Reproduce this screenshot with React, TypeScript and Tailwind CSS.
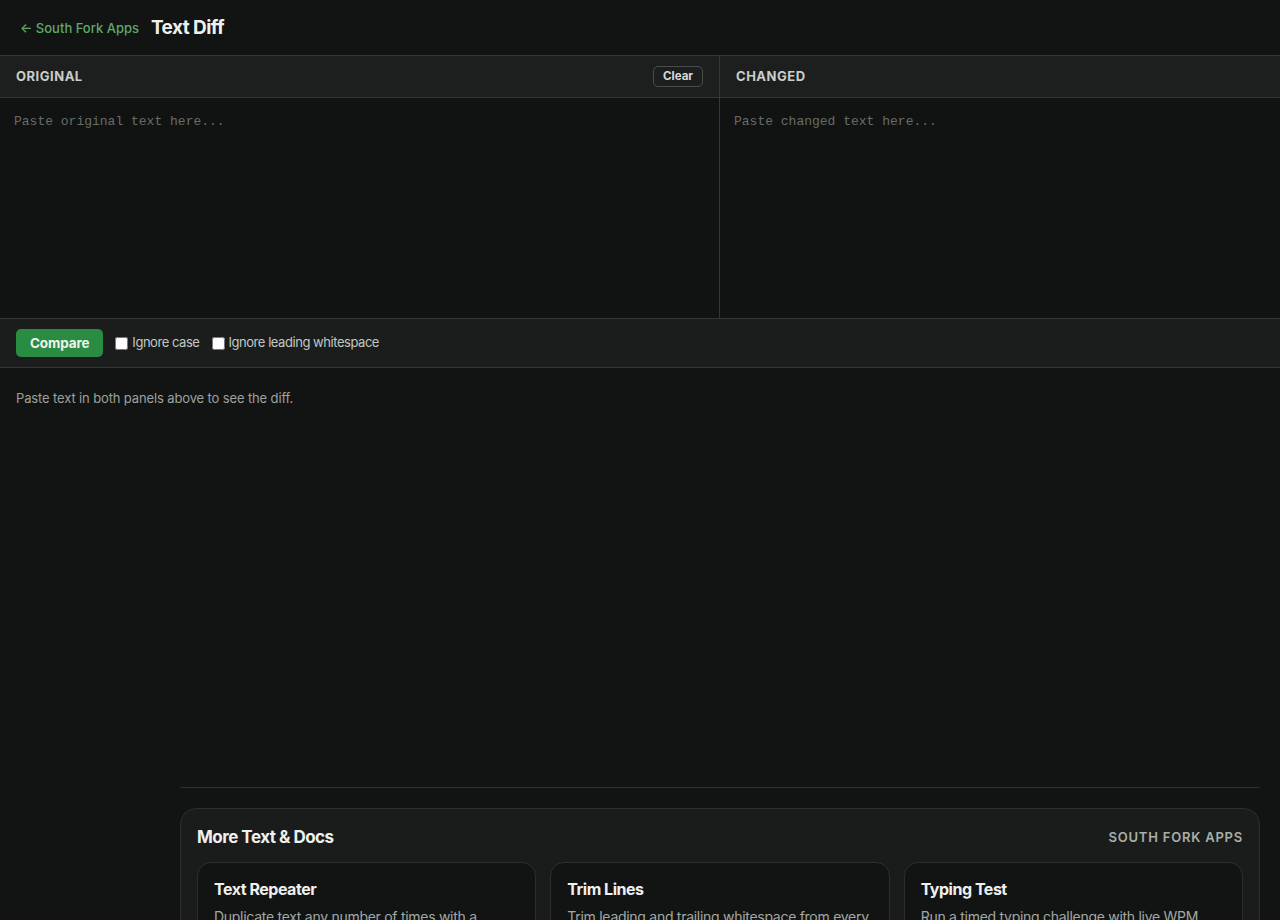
import { useState } from 'react'

const MORE_TOOLS = [
  { title: 'Text Repeater', desc: 'Duplicate text any number of times with a custom separator between each copy.' },
  { title: 'Trim Lines', desc: 'Trim leading and trailing whitespace from every line of your text at once.' },
  { title: 'Typing Test', desc: 'Run a timed typing challenge with live WPM, accuracy and error tracking.' },
]

function PanelHeader({ label, onClear }: { label: string; onClear?: () => void }) {
  return (
    <div className="h-[42px] flex items-center justify-between px-4 bg-[#1d1f1e] border-b border-[#343735]">
      <span className="text-[13px] font-bold tracking-[0.04em] text-[#c9cec9] uppercase">{label}</span>
      {onClear && (
        <button
          onClick={onClear}
          className="h-[21px] px-[9px] rounded-[5px] border border-[#4a4d4b] text-[11.5px] font-bold text-[#d8dcd8] leading-none"
        >
          Clear
        </button>
      )}
    </div>
  )
}

export default function App() {
  const [original, setOriginal] = useState('')
  const [changed, setChanged] = useState('')
  const [ignoreCase, setIgnoreCase] = useState(false)
  const [ignoreWs, setIgnoreWs] = useState(false)

  return (
    <div
      className="min-h-screen bg-[#121413] text-[#e6e9e6]"
      style={{ fontFamily: 'Inter, "Noto Sans", sans-serif' }}
    >
      {/* header */}
      <header className="h-[56px] flex items-center gap-3 px-5 pt-[2px] border-b border-[#343735]">
        <a href="#" className="text-[13px] font-medium text-[#5ea96b]">
          ← South Fork Apps
        </a>
        <h1 className="text-[19px] font-bold tracking-[-0.03em] text-[#eef0ee]">Text Diff</h1>
      </header>

      {/* inputs */}
      <div className="grid grid-cols-[720px_1fr] border-b border-[#343735]">
        <div className="flex flex-col border-r border-[#343735]">
          <PanelHeader label="Original" onClear={() => setOriginal('')} />
          <textarea
            value={original}
            onChange={(e) => setOriginal(e.target.value)}
            placeholder="Paste original text here..."
            className="h-[220px] resize-none bg-[#111312] px-[14px] pt-[16px] pb-[14px] text-[13px] leading-[16px] text-[#dfe3df] placeholder:text-[#676c68] outline-none"
            style={{ fontFamily: '"Liberation Mono", monospace' }}
          />
        </div>
        <div className="flex flex-col">
          <PanelHeader label="Changed" />
          <textarea
            value={changed}
            onChange={(e) => setChanged(e.target.value)}
            placeholder="Paste changed text here..."
            className="h-[220px] resize-none bg-[#111312] px-[14px] pt-[16px] pb-[14px] text-[13px] leading-[16px] text-[#dfe3df] placeholder:text-[#676c68] outline-none"
            style={{ fontFamily: '"Liberation Mono", monospace' }}
          />
        </div>
      </div>

      {/* toolbar */}
      <div className="h-[49px] flex items-center gap-3 px-4 bg-[#1b1d1c] border-b border-[#343735]">
        <button className="h-[28px] px-[14px] rounded-[5px] bg-[#2a8b43] text-[13.5px] font-bold text-[#eef5ef] tracking-[-0.01em]">
          Compare
        </button>
        <label className="flex items-center gap-[4px] text-[13px] text-[#c2c7c3] tracking-[-0.035em]">
          <input
            type="checkbox"
            checked={ignoreCase}
            onChange={(e) => setIgnoreCase(e.target.checked)}
            className="w-[13px] h-[13px]"
          />
          Ignore case
        </label>
        <label className="flex items-center gap-[4px] text-[13px] text-[#c2c7c3] tracking-[-0.035em]">
          <input
            type="checkbox"
            checked={ignoreWs}
            onChange={(e) => setIgnoreWs(e.target.checked)}
            className="w-[13px] h-[13px]"
          />
          Ignore leading whitespace
        </label>
      </div>

      {/* result */}
      <div className="h-[419px] px-4 pt-[21px]">
        <p className="text-[13px] tracking-[-0.01em] text-[#9da29e]">Paste text in both panels above to see the diff.</p>
      </div>

      {/* more tools */}
      <div className="ml-[180px] mr-5 border-t border-[#2a3230] pt-5">
        <section className="rounded-2xl border border-[#2c2f2d] bg-[#1a1c1b] px-4 pt-[16px] pb-4">
          <div className="flex items-center justify-between mb-[11px]">
            <h2 className="text-[17px] font-bold tracking-[-0.03em] text-[#eef0ee]">More Text &amp; Docs</h2>
            <span className="text-[13px] font-semibold tracking-[0.06em] text-[#a9aea9] uppercase">South Fork Apps</span>
          </div>
          <div className="grid grid-cols-3 gap-[14px]">
            {MORE_TOOLS.map((t) => (
              <a
                key={t.title}
                href="#"
                className="block rounded-[14px] border border-[#2c2f2d] bg-[#121413] px-4 pt-[14px] pb-4"
              >
                <h3 className="text-[16px] font-bold tracking-[-0.03em] text-[#eef0ee]">{t.title}</h3>
                <p className="mt-[6px] text-[14px] leading-[20px] tracking-[-0.02em] text-[#a3a8a4]">{t.desc}</p>
              </a>
            ))}
          </div>
        </section>
      </div>
    </div>
  )
}
